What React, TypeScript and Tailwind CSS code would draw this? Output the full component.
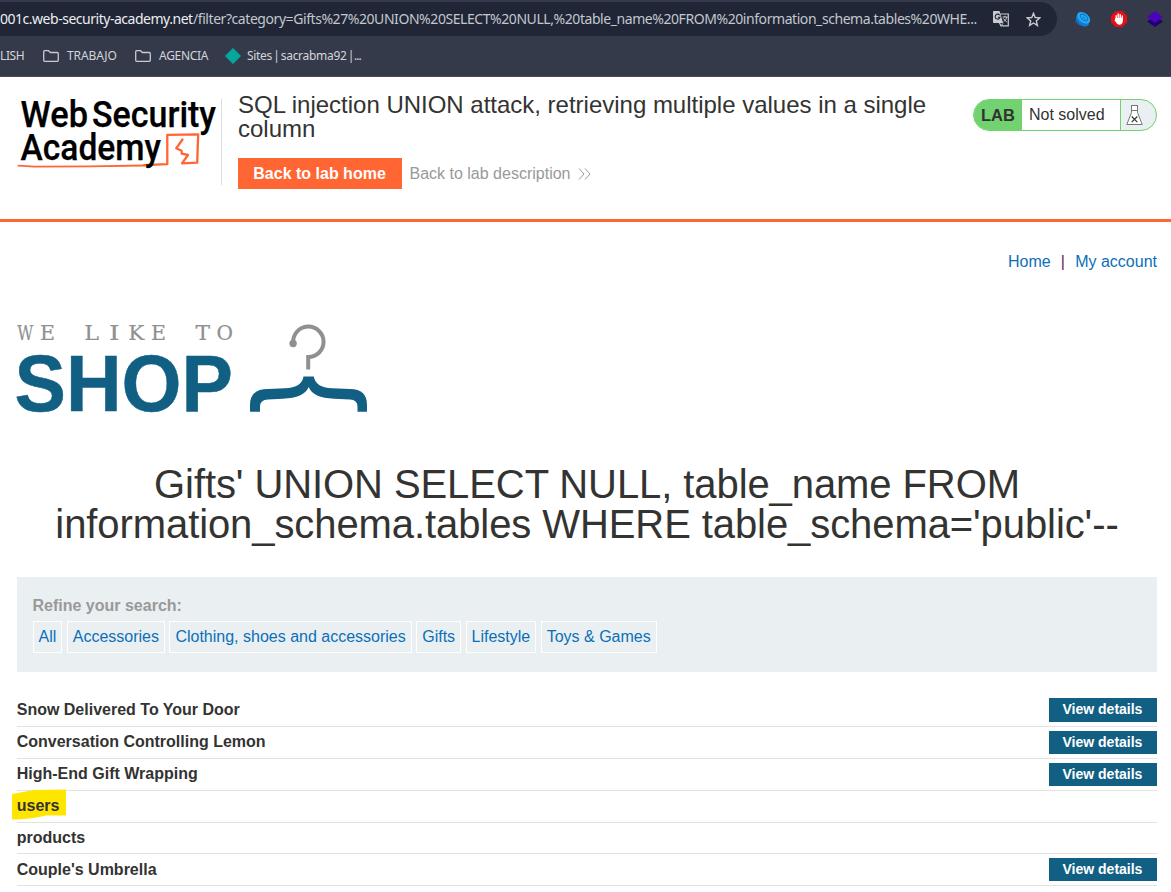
import type { ReactNode } from "react";

const categories = ["All", "Accessories", "Clothing, shoes and accessories", "Gifts", "Lifestyle", "Toys & Games"];

const products = [
  { name: "Snow Delivered To Your Door", details: true, row: "h-[32px]", button: "h-[24px] mt-[3px]" },
  { name: "Conversation Controlling Lemon", details: true, row: "h-[32px]", button: "h-[23px] mt-[4px]" },
  { name: "High-End Gift Wrapping", details: true, row: "h-[32px]", button: "h-[23px] mt-[4px]" },
  { name: "users", details: false, marked: true, row: "h-[32px]", button: "" },
  { name: "products", details: false, row: "h-[31px]", button: "" },
  { name: "Couple's Umbrella", details: true, row: "h-[32px]", button: "h-[23px] mt-[4px]" },
];

function Folder() {
  return (
    <svg width="16" height="12" viewBox="0 0 16 12" fill="none" stroke="#c9cbd1" strokeWidth="1.3" strokeLinejoin="round">
      <path d="M.7 10.3V1.7q0-1 1-1H5.6L7.3 2.5H14.3q1 0 1 1v6.8q0 1-1 1H1.7q-1 0-1-1Z" />
    </svg>
  );
}

function Bookmark({ children, tracking = "" }: { children: ReactNode; tracking?: string }) {
  return <span className={`block whitespace-nowrap text-[12px] leading-[16px] text-[#d3d5da] ${tracking}`}>{children}</span>;
}

function BrowserBar() {
  return (
    <div className="h-[77px] border-b border-[#4a4c55] bg-[#353a4a] pt-[2px] font-['Noto_Sans',sans-serif]">
      <div className="flex h-[34px] items-center">
        <div className="flex h-full w-[1057px] shrink-0 items-center rounded-r-full bg-[#202635]">
          <span className="w-[193px] shrink-0 whitespace-nowrap text-[14px] tracking-[-0.48px] text-[#eceef2]">
            001c.web-security-academy.net
          </span>
          <span className="w-[799px] shrink-0 whitespace-nowrap text-[14px] tracking-[-0.435px] text-[#c3c7cf]">
            /filter?category=Gifts%27%20UNION%20SELECT%20NULL,%20table_name%20FROM%20information_schema.tables%20WHE...
          </span>
          <svg className="shrink-0" width="18" height="18" viewBox="0 0 18 18" fill="none">
            <path d="M7 4h9.3v11.8H9L7 12" stroke="#c9cbd1" strokeWidth="1.2" />
            <path d="M1.8 1h5.7l3.6 12H1.8Q1 13 1 12.200V1.800Q1 1 1.800 1Z" fill="#c9cbd1" />
            <path d="M7.700 5.200A2.500 2.500 0 1 0 8.100 7.200H5.800" stroke="#202635" strokeWidth="1.100" />
            <path d="M10.500 7h5M13 5.800V7M14.800 7c-.4 2-1.800 3.700-3.300 4.800M11.200 8.300l3.800 4M9 16l2-2.700" stroke="#c9cbd1" strokeWidth="1" />
          </svg>
          <svg className="ml-[15.500px] shrink-0" width="15" height="15" viewBox="0 0 15 15" fill="none" stroke="#c9cbd1" strokeWidth="1.400">
            <path d="m7.500 1.300 1.700 4.200 4.600.4-3.500 3 1.100 4.500-3.900-2.400-3.900 2.400 1.100-4.500-3.500-3 4.600-.4Z" />
          </svg>
        </div>
        <svg className="ml-[18px]" width="16" height="16" viewBox="0 0 16 16">
          <ellipse cx="7.500" cy="9.500" rx="7.500" ry="4.800" transform="rotate(38 7.500 9.500)" fill="#127bd5" />
          <ellipse cx="8.700" cy="6.800" rx="7.300" ry="4.700" transform="rotate(38 8.700 6.800)" fill="#21aaf7" />
          <ellipse cx="9" cy="6.500" rx="4.300" ry="2.300" transform="rotate(38 9 6.500)" fill="none" stroke="#1471bf" />
          <path d="m7.500 5.700 3 2.200M0 9.500q2 4 7 5.200" stroke="#1471bf" fill="none" />
        </svg>
        <svg className="ml-[20px]" width="16" height="16" viewBox="0 0 16 16">
          <path d="M4.700 0h6.600L16 4.700v6.600L11.300 16H4.700L0 11.300V4.700Z" fill="#e60f14" />
          <path d="M5.200 8V4.600M7.200 7.500V3M9.200 7.500V3.600M11.200 8V5" stroke="#fff" strokeWidth="1.400" strokeLinecap="round" />
          <path d="M4.500 7h7.400v3.500Q11 13.700 8.500 13.700 6 13.700 3.700 9.200Z" fill="#fff" />
        </svg>
        <svg className="ml-[20px]" width="16" height="16" viewBox="0 0 16 16">
          <path d="m0 10.500 8-5 8 5L8 16Z" fill="#21006f" />
          <path d="m0 6 8-6 8 6-8 6Z" fill="#4b04b8" />
        </svg>
      </div>
      <div className="flex h-[39px] items-center">
        <div className="w-[43px]"><Bookmark tracking="tracking-[-0.4px]">LISH</Bookmark></div>
        <div className="flex w-[92px] items-center gap-[8px]"><Folder /><Bookmark tracking="tracking-[-0.1px]">TRABAJO</Bookmark></div>
        <div className="flex w-[90px] items-center gap-[8px]"><Folder /><Bookmark tracking="tracking-[-0.3px]">AGENCIA</Bookmark></div>
        <div className="flex items-center gap-[6px]">
          <svg width="16" height="16" viewBox="0 0 16 16"><path d="m8 0 8 8-8 8-8-8Z" fill="#05a79d" /></svg>
          <Bookmark tracking="tracking-[-0.3px] [word-spacing:-1.6px]">Sites | sacrabma92 |<span className="tracking-[-1px]">...</span></Bookmark>
        </div>
      </div>
    </div>
  );
}

function AcademyLogo() {
  return (
    <svg width="221" height="120" viewBox="0 77 221 120" className="shrink-0" fontFamily="Roboto, sans-serif" fontWeight="500" fontSize="37.500" stroke="#000" strokeWidth=".25">
      <text x="20.500" y="127.300" textLength="67.500" lengthAdjust="spacingAndGlyphs">Web</text>
      <text x="92" y="127.300" textLength="124" lengthAdjust="spacingAndGlyphs">Security</text>
      <g fill="none" stroke="#ff6633" strokeLinejoin="round" strokeLinecap="round">
        <path d="M18.500 165.700 34 166.600 90 166.400 145 165.500" strokeWidth="1.800" />
        <path d="M144 165.200 167.300 164.200 167.300 134.800 198.200 134.300 197.200 162.700 182 163.300 188 155 181.700 153.700 181.600 150.800 176.200 148.300 182.500 139.500" strokeWidth="2.300" />
      </g>
      <text x="20.500" y="160" textLength="140.500" lengthAdjust="spacingAndGlyphs">Academy</text>
    </svg>
  );
}

function LabHeader() {
  return (
    <header className="flex h-[145px] border-b-[3px] border-[#ff6633] bg-white">
      <AcademyLogo />
      <div className="mt-[22px] h-[86px] w-px shrink-0 bg-[#dedede]" />
      <div className="ml-[16px] w-[735px] shrink-0 pt-[16px]">
        <h2 className="text-[24px] leading-[24px] tracking-[-0.010px]">SQL injection UNION attack, retrieving multiple values in a single column</h2>
        <div className="mt-[17px] flex items-center">
          <a className="flex h-[31px] w-[164px] items-center bg-[#ff6633] pl-[15.300px] font-bold text-white">Back to lab home</a>
          <a className="ml-[7.500px] text-[#999]">Back to lab description</a>
          <svg className="ml-[8px]" width="13" height="12" viewBox="0 0 13 12" fill="none" stroke="#999">
            <path d="m1 .5 5 5.500-5 5.500M7 .5 12 6l-5 5.500" />
          </svg>
        </div>
      </div>
      <div className="mt-[22px] flex h-[32px] w-[184px] shrink-0 overflow-hidden rounded-[16px] border border-[#72d26f] bg-[#eaeff2] leading-[30px]">
        <b className="w-[48px] bg-[#72d26f] pl-[7px] text-[16.500px]">LAB</b>
        <span className="w-[99px] border-r border-[#72d26f] bg-white pl-[7px]">Not solved</span>
        <svg className="ml-[4.500px] mt-[4px]" width="17" height="22" viewBox="0 0 17 22" fill="none" stroke="#777">
          <path d="M5.500 1.500V8.500L.8 20.500H16.200L11.500 8.500V1.500" fill="#fff" />
          <path d="M5 1.500h7M6 6.500h5" />
          <path d="m5.700 12.500 5.600 5.600m0-5.600-5.600 5.600" stroke="#333" strokeWidth="1.200" />
        </svg>
      </div>
    </header>
  );
}

function ShopLogo() {
  const letters: [string, number, number][] = [
    ["W", 17.300, 16], ["E", 40, 15], ["L", 84.200, 14.800], ["I", 109, 10.500],
    ["K", 128.300, 16], ["E", 151, 15], ["T", 195.500, 14.500], ["O", 216.500, 16.500],
  ];
  return (
    <svg className="block" width="390" height="110" viewBox="0 315 390 110">
      <g fill="#8f9090" stroke="#8f9090" strokeWidth=".2" fontFamily="DejaVu Serif, serif" fontSize="20.500">
        {letters.map(([letter, x, width]) => (
          <text key={x} x={x} y="340.200" textLength={width} lengthAdjust="spacingAndGlyphs">{letter}</text>
        ))}
      </g>
      <text x="14.500" y="411.200" fill="#125f84" stroke="#125f84" strokeWidth=".5" fontFamily="Liberation Sans, sans-serif" fontWeight="700" fontSize="79.500" textLength="218.500" lengthAdjust="spacingAndGlyphs">SHOP</text>
      <path d="M293.200 343A15.200 15.200 0 1 1 308.200 357V369.500" fill="none" stroke="#8f9090" strokeWidth="4" />
      <circle cx="293.100" cy="343.500" r="3.700" fill="#8f9090" />
      <path d="M250 411.700V405Q250 389 268 389L285 388.300Q302 387.500 303.500 376.500H313.800Q315.500 387.500 332 388.300L350 389Q367 389 367 405V411.700H357.500V407Q357.500 399.500 350 399.500L334 398.700Q313 398 308.700 387 304 398 283 398.700L268 399.500Q260 399.500 260 407V411.700Z" fill="#125f84" />
    </svg>
  );
}

export default function App() {
  return (
    <div className="h-[892px] w-[1171px] overflow-hidden bg-white font-['Liberation_Sans',Arial,sans-serif] text-[16px] leading-[20px] text-[#333332]">
      <BrowserBar />
      <LabHeader />
      <nav className="flex h-[93px] justify-end gap-[10.200px] pr-[14px] pt-[30px] text-[#0b6fb8]">
        <a>Home</a><span className="text-[#6d214c]">|</span><a>My account</a>
      </nav>
      <ShopLogo />
      <h1 className="mt-[39px] h-[113px] pl-[3px] text-center text-[40px] leading-[40px] tracking-[-0.085px]">
        Gifts' UNION SELECT NULL, table_name FROM<br />information_schema.tables WHERE table_schema='public'--
      </h1>
      <section className="ml-[17px] h-[95px] w-[1140px] bg-[#eaeff2] pl-[15.500px] pt-[19px]">
        <p className="font-bold text-[#999]">Refine your search:</p>
        <div className="mt-[5px] flex gap-[4.450px] text-[#0b6fb8]">
          {categories.map((c) => (
            <a key={c} className="h-[32px] whitespace-nowrap border border-white px-[5px] leading-[30px]">{c}</a>
          ))}
        </div>
      </section>
      <section className="ml-[17px] mt-[23px] w-[1140px]">
        {products.map((p) => (
          <div key={p.name} className={`flex items-start justify-between border-b border-[#e2e2e2] ${p.row}`}>
            <span className={`relative -ml-[0.300px] font-bold ${p.name.startsWith("Couple") ? "pt-[6px]" : "pt-[5px]"}`}>
              {p.marked && (
                <svg className="absolute left-[-5px] top-[-2px]" width="54" height="32" viewBox="0 0 54 32">
                  <path d="M0 5 22 1 54 .5V26.500L34 26.500Q18 30.500 0 30.500Z" fill="#ffe600" />
                </svg>
              )}
              <span className="relative">{p.name}</span>
            </span>
            {p.details && (
              <a className={`w-[108px] bg-[#125f84] pl-[13.500px] text-[14px] font-bold leading-[23px] text-white ${p.button}`}>View details</a>
            )}
          </div>
        ))}
      </section>
    </div>
  );
}
